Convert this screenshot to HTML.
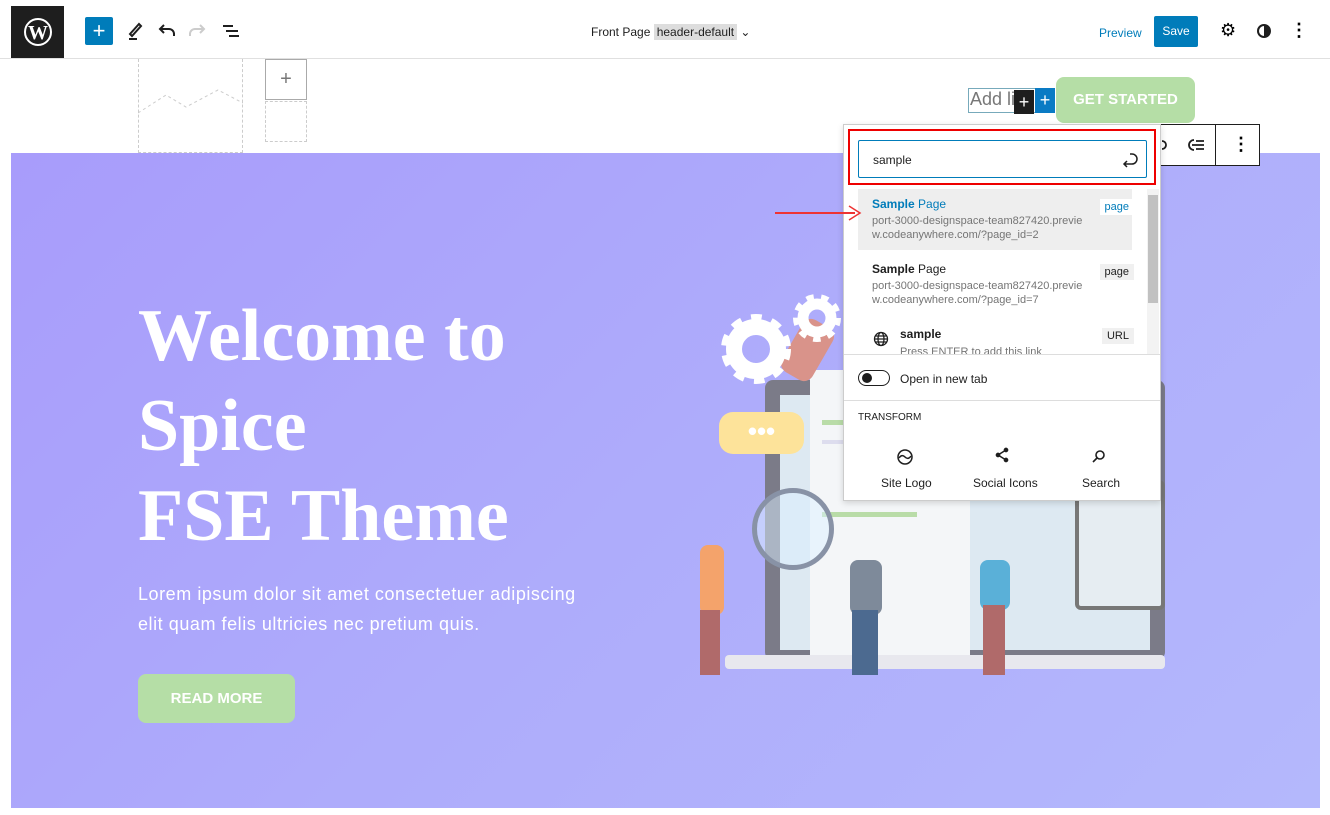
<!DOCTYPE html>
<html><head><meta charset="utf-8"><style>
*{margin:0;padding:0;box-sizing:border-box}
body{width:1330px;height:815px;background:#fff;font-family:"Liberation Sans",sans-serif;position:relative;overflow:hidden}
.a{position:absolute}
.hero{left:11px;top:153px;width:1309px;height:655px;background:linear-gradient(135deg,#a89cfb 0%,#aeacfb 50%,#b4b8fc 100%)}
h1{position:absolute;left:138px;top:291px;font-family:"Liberation Serif",serif;font-weight:bold;color:#fff;font-size:74px;line-height:90px}
.p{left:138px;top:579px;color:#fff;font-size:18px;line-height:30px;letter-spacing:0.55px}
.btn{background:#b5dea6;color:#fff;font-weight:bold;border-radius:8px;text-align:center}
.pop{left:843px;top:124px;width:318px;height:377px;background:#fff;border:1px solid #ccc;box-shadow:0 2px 6px rgba(0,0,0,.15);font-size:12px;color:#1e1e1e}
.tag{position:absolute;right:14px;background:#f0f0f0;font-size:11px;padding:2px 5px}
.url{color:#757575;font-size:11px;line-height:14px}
</style></head><body>
<div class="a" style="left:11px;top:6px;width:53px;height:53px;background:#1e1e1e"></div>
<svg class="a" style="left:23px;top:17px" width="30" height="30" viewBox="0 0 30 30"><circle cx="15" cy="15" r="13" fill="none" stroke="#fff" stroke-width="2"/><text x="15" y="22" font-family="Liberation Serif" font-weight="bold" font-size="20" fill="#fff" text-anchor="middle">W</text></svg>
<div class="a" style="left:85px;top:17px;width:28px;height:28px;background:#007cba;border-radius:2px;color:#fff;font-size:22px;text-align:center;line-height:27px">+</div>
<svg class="a" style="left:126px;top:20px" width="120" height="22" viewBox="0 0 120 22" fill="none" stroke="#1e1e1e" stroke-width="2"><path d="M4 14l9-10 2 2-9 10zM3 19h8"/><path d="M48 16v-2a5 5 0 00-5-5h-9M38 5l-4 4 4 4"/><path d="M64 16v-2a5 5 0 015-5h9M74 5l4 4-4 4" stroke="#ccc"/><path d="M97 6h10M100 11h12M103 16h10"/></svg>
<div class="a" style="left:591px;top:25px;font-size:12px;color:#1e1e1e">Front Page <span style="background:#ddd;padding:1px 3px">header-default</span> &#8964;</div>
<div class="a" style="left:1099px;top:26px;font-size:12px;color:#007cba">Preview</div>
<div class="a" style="left:1154px;top:16px;width:44px;height:31px;background:#007cba;color:#fff;font-size:12px;text-align:center;line-height:31px;border-radius:2px">Save</div>
<div class="a" style="left:1220px;top:20px;font-size:18px">⚙</div>
<div class="a" style="left:1257px;top:24px;width:14px;height:14px;border:2px solid #1e1e1e;border-radius:50%;background:linear-gradient(90deg,#fff 50%,#1e1e1e 50%)"></div>
<div class="a" style="left:1290px;top:20px;font-size:18px;font-weight:bold">⋮</div>
<div class="a" style="left:0;top:58px;width:1330px;height:1px;background:#e0e0e0"></div>
<div class="a" style="left:138px;top:59px;width:105px;height:94px;border:1px dashed #ccc;border-top:none"></div>
<svg class="a" style="left:138px;top:85px" width="105" height="30"><path d="M0 28L28 10 48 22 80 5 105 18" fill="none" stroke="#ccc" stroke-dasharray="3 3"/></svg>
<div class="a" style="left:265px;top:59px;width:42px;height:41px;border:1px solid #aaa;background:#fff;text-align:center;line-height:38px;color:#777;font-size:20px">+</div>
<div class="a" style="left:265px;top:101px;width:42px;height:41px;border:1px dashed #ccc"></div>
<div class="a" style="left:968px;top:88px;width:68px;height:25px;border:1px solid #7ab;font-size:18px;color:#777;padding-left:1px">Add li</div>
<div class="a" style="left:1014px;top:90px;width:20px;height:24px;background:#1e1e1e;color:#fff;text-align:center;line-height:24px;font-size:18px">+</div>
<div class="a" style="left:1035px;top:88px;width:20px;height:25px;background:#0a7bc4;color:#fff;text-align:center;line-height:24px;font-size:18px">+</div>
<div class="a btn" style="left:1056px;top:77px;width:139px;height:46px;line-height:46px;font-size:15px">GET STARTED</div>
<div class="a hero"></div>
<h1>Welcome to<br>Spice<br>FSE Theme</h1>
<div class="a p">Lorem ipsum dolor sit amet consectetuer adipiscing<br>elit quam felis ultricies nec pretium quis.</div>
<div class="a btn" style="left:138px;top:674px;width:157px;height:49px;line-height:49px;font-size:15px">READ MORE</div>
<div class="a" style="left:765px;top:380px;width:400px;height:280px;background:#7b7b88;border-radius:8px"></div>
<div class="a" style="left:780px;top:395px;width:370px;height:255px;background:#dde9f2"></div>
<div class="a" style="left:810px;top:370px;width:160px;height:290px;background:#f4f6f8"></div>
<div class="a" style="left:822px;top:420px;width:60px;height:5px;background:#b9dca8"></div>
<div class="a" style="left:822px;top:440px;width:120px;height:4px;background:#dde"></div>
<div class="a" style="left:822px;top:512px;width:95px;height:5px;background:#b9dca8"></div>
<div class="a" style="left:725px;top:655px;width:440px;height:14px;background:#e8e8ee;border-radius:4px"></div>
<div class="a" style="left:1075px;top:480px;width:90px;height:130px;background:#e6edf2;border:4px solid #777;border-radius:6px"></div>
<div class="a" style="left:790px;top:320px;width:35px;height:60px;background:#d9938a;border-radius:10px;transform:rotate(30deg)"></div>
<div class="a" style="left:719px;top:412px;width:85px;height:42px;background:#fde39a;border-radius:14px;text-align:center;color:#fff;font-size:26px;line-height:38px;font-weight:bold">•••</div>
<svg class="a" style="left:712px;top:285px" width="140" height="110" viewBox="0 0 140 110">
<g fill="none" stroke="#fff"><circle cx="44" cy="64" r="22" stroke-width="16"/><circle cx="44" cy="64" r="30" stroke-width="10" stroke-dasharray="10 9.5"/><circle cx="105" cy="33" r="14" stroke-width="11"/><circle cx="105" cy="33" r="20" stroke-width="8" stroke-dasharray="7 7"/></g></svg>
<div class="a" style="left:752px;top:488px;width:82px;height:82px;border:5px solid #8892a6;border-radius:50%;background:rgba(220,240,255,.5)"></div>
<div class="a" style="left:700px;top:545px;width:24px;height:70px;background:#f4a36b;border-radius:8px"></div>
<div class="a" style="left:700px;top:610px;width:20px;height:65px;background:#b06a6a"></div>
<div class="a" style="left:850px;top:560px;width:32px;height:55px;background:#7e8a9a;border-radius:8px"></div>
<div class="a" style="left:852px;top:610px;width:26px;height:65px;background:#4c6a90"></div>
<div class="a" style="left:980px;top:560px;width:30px;height:50px;background:#5ab0d8;border-radius:8px"></div>
<div class="a" style="left:983px;top:605px;width:22px;height:70px;background:#b06a6a"></div>
<div class="a" style="left:1150px;top:124px;width:110px;height:42px;background:#fff;border:1px solid #1e1e1e"></div>
<div class="a" style="left:1215px;top:124px;width:1px;height:42px;background:#1e1e1e"></div>
<svg class="a" style="left:1160px;top:136px" width="48" height="18" viewBox="0 0 48 18" fill="none" stroke="#1e1e1e" stroke-width="1.8"><path d="M2 5a4 4 0 010 8"/><path d="M34 4a5 5 0 100 10M32 9h12M36 5h8M36 13h8"/></svg>
<div class="a" style="left:1232px;top:134px;font-size:18px;font-weight:bold">⋮</div>
<div class="a pop">
 <div class="a" style="left:14px;top:15px;width:289px;height:38px;border:1.5px solid #007cba;border-radius:2px;padding:12px 14px;font-size:12px">sample</div>
 <svg class="a" style="left:277px;top:26px" width="18" height="18" viewBox="0 0 18 18" fill="none" stroke="#1e1e1e" stroke-width="1.5"><path d="M9 3h2a5 5 0 010 10H3M6 10l-3 3 3 3"/></svg>
 <div class="a" style="left:14px;top:64px;width:274px;height:61px;background:#eeeeee"></div>
 <div class="a" style="left:28px;top:72px;color:#007cba"><b>Sample</b> Page</div>
 <div class="a url" style="left:28px;top:89px">port-3000-designspace-team827420.previe<br>w.codeanywhere.com/?page_id=2</div>
 <div class="a tag" style="top:74px;right:26px;background:#fff;color:#007cba">page</div>
 <div class="a" style="left:28px;top:137px"><b>Sample</b> Page</div>
 <div class="a url" style="left:28px;top:154px">port-3000-designspace-team827420.previe<br>w.codeanywhere.com/?page_id=7</div>
 <div class="a tag" style="top:139px;right:26px">page</div>
 <svg class="a" style="left:29px;top:206px" width="16" height="16" viewBox="0 0 16 16" fill="none" stroke="#1e1e1e" stroke-width="1.3"><circle cx="8" cy="8" r="6.5"/><ellipse cx="8" cy="8" rx="3" ry="6.5"/><path d="M1.5 8h13M2.5 5h11M2.5 11h11"/></svg>
 <div class="a" style="left:56px;top:202px"><b>sample</b></div>
 <div class="a url" style="left:56px;top:220px">Press ENTER to add this link</div>
 <div class="a tag" style="top:203px;right:26px">URL</div>
 <div class="a" style="left:303px;top:64px;width:12px;height:165px;background:#f3f3f3"></div>
 <div class="a" style="left:304px;top:70px;width:10px;height:108px;background:#c1c1c1"></div>
 <div class="a" style="left:0;top:229px;width:316px;height:1px;background:#ddd"></div>
 <div class="a" style="left:14px;top:245px;width:32px;height:16px;border:1.5px solid #1e1e1e;border-radius:8px"></div>
 <div class="a" style="left:18px;top:248px;width:10px;height:10px;background:#1e1e1e;border-radius:50%"></div>
 <div class="a" style="left:56px;top:247px">Open in new tab</div>
 <div class="a" style="left:0;top:275px;width:316px;height:1px;background:#ddd"></div>
 <div class="a" style="left:14px;top:287px;font-size:10px">TRANSFORM</div>
 <svg class="a" style="left:52px;top:323px" width="18" height="18" viewBox="0 0 18 18" fill="none" stroke="#1e1e1e" stroke-width="1.5"><circle cx="9" cy="9" r="7"/><path d="M3 10c2-3 4-3 6-1s4 2 6-1"/></svg>
 <div class="a" style="left:37px;top:351px">Site Logo</div>
 <svg class="a" style="left:150px;top:322px" width="16" height="16" viewBox="0 0 16 16" fill="#1e1e1e" stroke="#1e1e1e" stroke-width="1.5"><path d="M12 3L4 8l8 5" fill="none"/><circle cx="12" cy="3" r="1.6"/><circle cx="4" cy="8" r="1.6"/><circle cx="12" cy="13" r="1.6"/></svg>
 <div class="a" style="left:129px;top:351px">Social Icons</div>
 <svg class="a" style="left:248px;top:324px" width="14" height="14" viewBox="0 0 14 14" fill="none" stroke="#1e1e1e" stroke-width="1.6"><circle cx="8" cy="6" r="4"/><path d="M5 9l-4 4"/></svg>
 <div class="a" style="left:238px;top:351px">Search</div>
</div>
<div class="a" style="left:848px;top:129px;width:308px;height:56px;border:2px solid #e00"></div>
<div class="a" style="left:775px;top:212px;width:80px;height:2px;background:#e33"></div>
<svg class="a" style="left:848px;top:205px" width="14" height="16"><path d="M1 1l11 7-11 7" fill="none" stroke="#e33" stroke-width="1.5"/></svg>
</body></html>
